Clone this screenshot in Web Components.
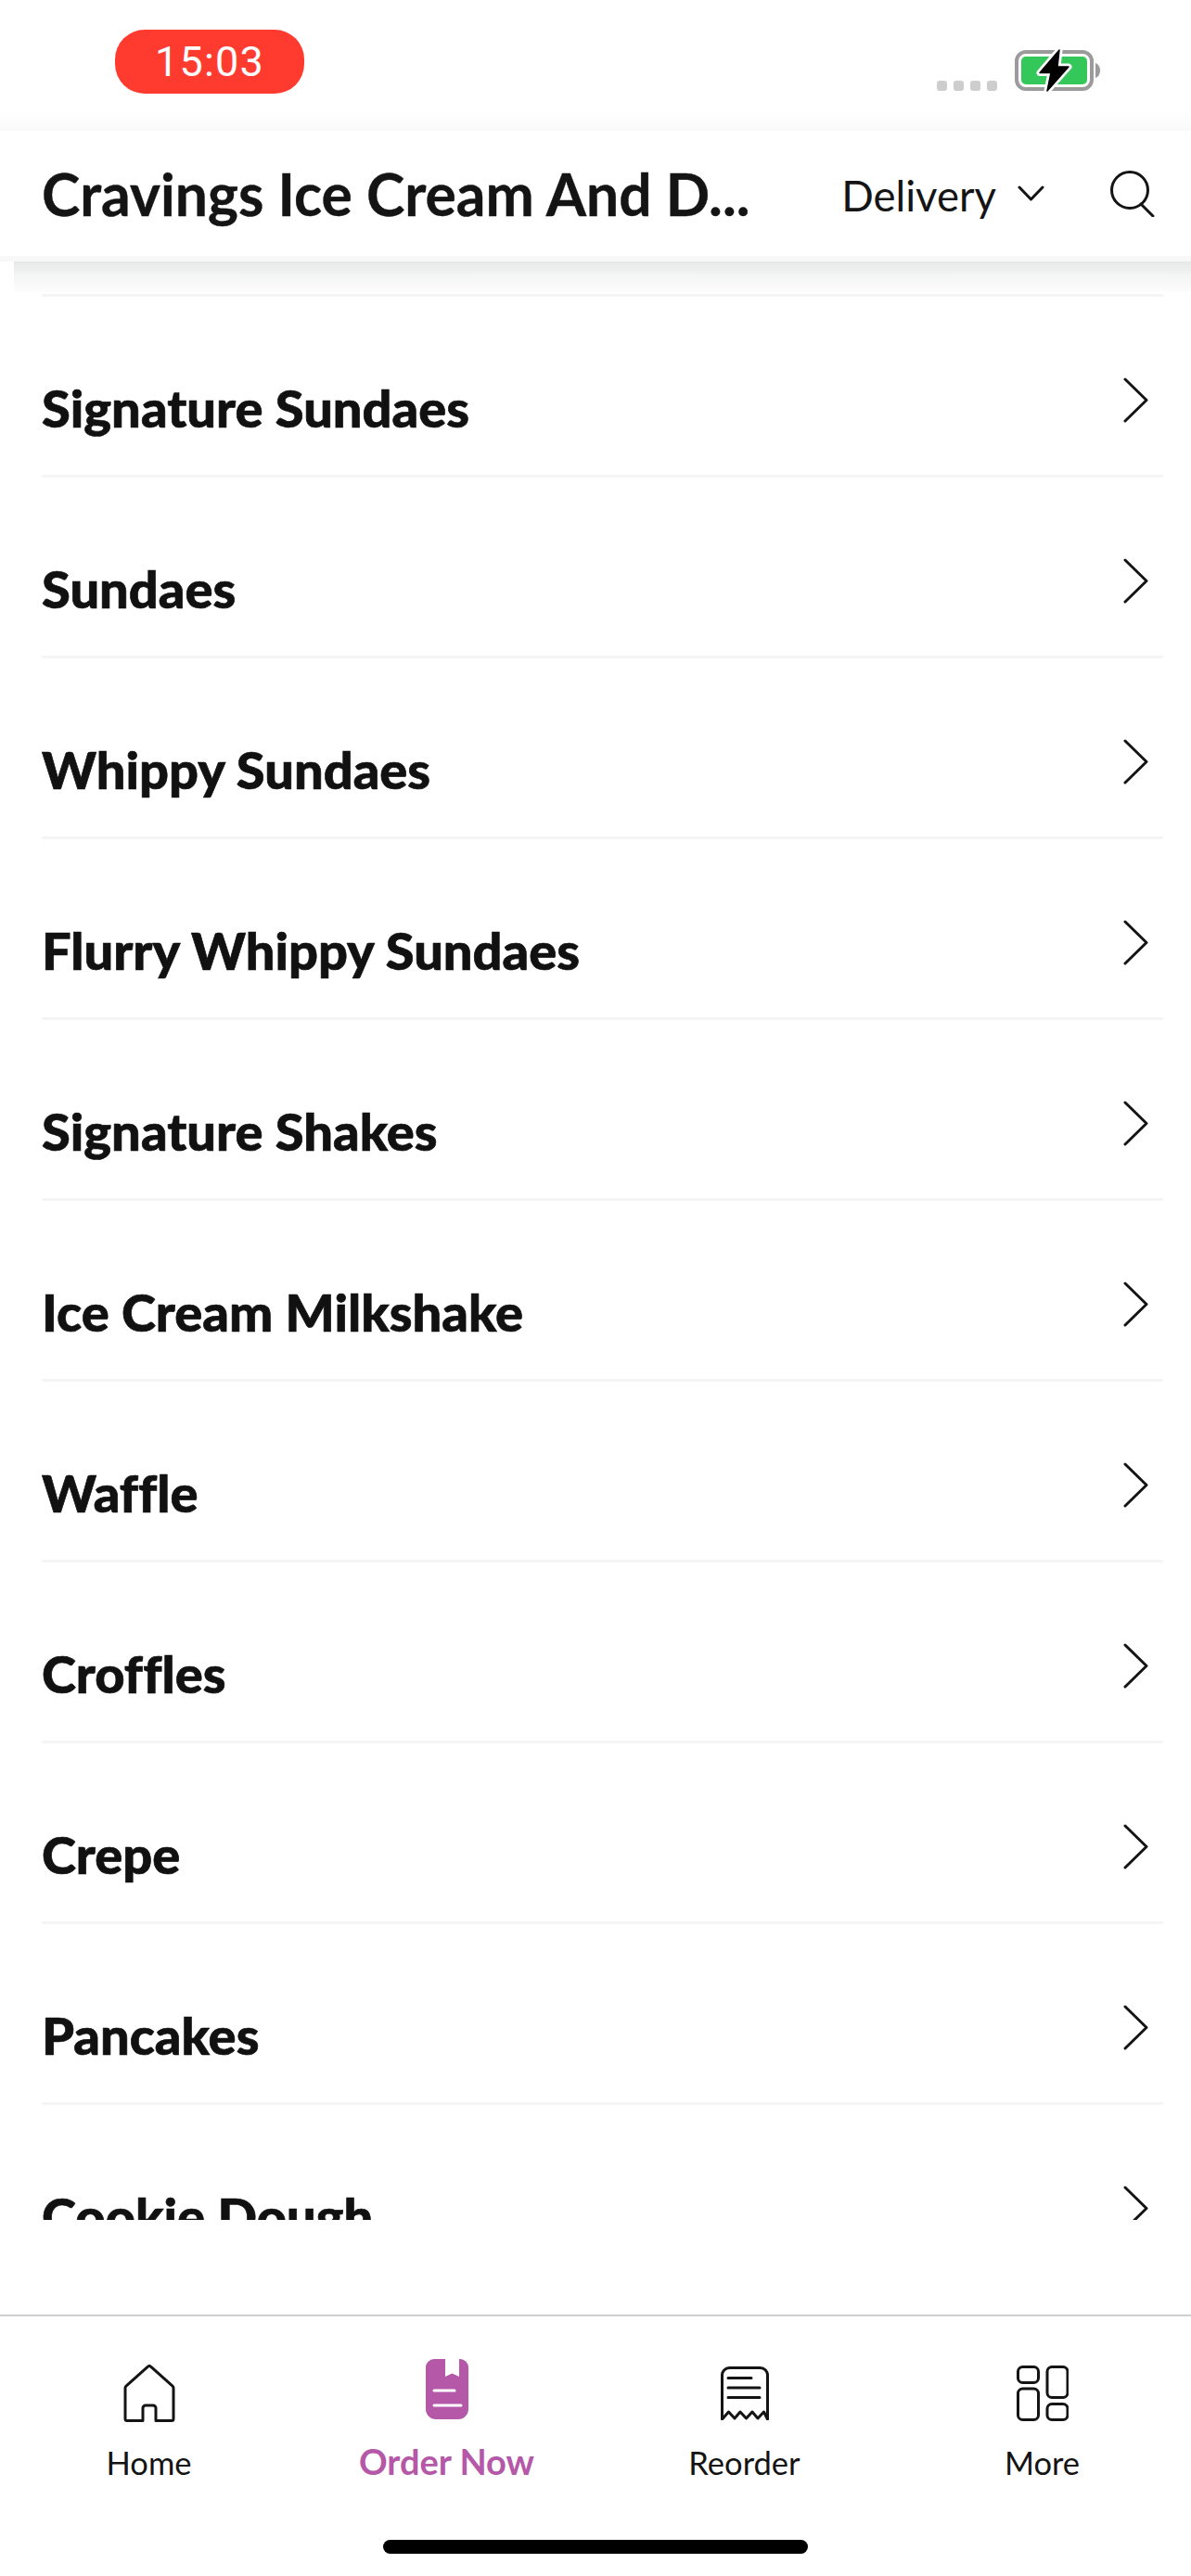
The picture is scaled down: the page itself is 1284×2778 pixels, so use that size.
<!DOCTYPE html>
<html lang="en">
<head>
<meta charset="utf-8">
<title>Cravings Ice Cream And Desserts</title>
<style>
  html, body { margin: 0; background: #fff; }
  body { font-family: Lato, "Liberation Sans", sans-serif; color: #141414; }
</style>
</head>
<body>
<app-shell>
  <status-bar slot="top" time="15:03"></status-bar>
  <app-header slot="top" title-text="Cravings Ice Cream And D..." mode="Delivery"></app-header>
  <menu-list>
    <menu-row>Signature Sundaes</menu-row>
    <menu-row>Sundaes</menu-row>
    <menu-row>Whippy Sundaes</menu-row>
    <menu-row>Flurry Whippy Sundaes</menu-row>
    <menu-row>Signature Shakes</menu-row>
    <menu-row>Ice Cream Milkshake</menu-row>
    <menu-row>Waffle</menu-row>
    <menu-row>Croffles</menu-row>
    <menu-row>Crepe</menu-row>
    <menu-row>Pancakes</menu-row>
    <menu-row>Cookie Dough</menu-row>
  </menu-list>
  <tab-bar slot="bottom">
    <tab-item label="Home">
      <svg width="56" height="62" viewBox="0 0 56 62" fill="none" stroke="#141414" stroke-width="3" stroke-linejoin="round">
        <path d="M21 60.5V47a3 3 0 0 1 3-3h8a3 3 0 0 1 3 3v13.5h17a2 2 0 0 0 2-2V25.5a3 3 0 0 0-1-2.4L29.5 2.2a2.2 2.2 0 0 0-3 0L3 23.1a3 3 0 0 0-1 2.4v33a2 2 0 0 0 2 2z"/>
      </svg>
    </tab-item>
    <tab-item label="Order Now" active>
      <svg width="46" height="66" viewBox="0 0 46 66">
        <path fill="#b558a8" d="M9 0H21V19L28.5 15.5L36 19V0H37A9 9 0 0 1 46 9V54A11 11 0 0 1 35 65H11A11 11 0 0 1 0 54V9A9 9 0 0 1 9 0Z"/>
        <path stroke="#fff" stroke-width="3" stroke-linecap="round" d="M9 34H31M9 50H38"/>
      </svg>
    </tab-item>
    <tab-item label="Reorder">
      <svg width="52" height="58" viewBox="0 0 52 58" fill="none" stroke="#141414" stroke-width="3" stroke-linejoin="round" stroke-linecap="round">
        <path d="M1.5 57V10a8 8 0 0 1 8-8.500h33a8 8 0 0 1 8 8.500V57l-4-8-6.500 7-6-7-6.500 7-6.500-7-6 7-6.500-7z"/>
        <path d="M8 12.500H33M8 23H42M8 33.500H42"/>
      </svg>
    </tab-item>
    <tab-item label="More">
      <svg width="56" height="60" viewBox="0 0 56 60" fill="none" stroke="#141414" stroke-width="3">
        <rect x="1.500" y="1.500" width="22" height="17" rx="5"/>
        <rect x="1.500" y="25" width="22" height="33.500" rx="5"/>
        <rect x="33" y="1.500" width="22" height="33" rx="5"/>
        <rect x="33" y="41.500" width="22" height="17" rx="5"/>
      </svg>
    </tab-item>
  </tab-bar>
</app-shell>

<script>
class AppShell extends HTMLElement {
    constructor() {
        super();
        this.attachShadow({ mode: 'open' });
        this.shadowRoot.innerHTML = `
            <style>
                :host { display: flex; flex-direction: column; height: 2778px; background: #fff; overflow: hidden; }
                .body { flex: 1; min-height: 0; }
            </style>
            <slot name="top"></slot>
            <div class="body"><slot></slot></div>
            <slot name="bottom"></slot>
        `;
    }
}

class StatusBar extends HTMLElement {
    constructor() {
        super();
        this.attachShadow({ mode: 'open' });
    }

    connectedCallback() {
        this.shadowRoot.innerHTML = `
            <style>
                :host {
                    display: flex;
                    align-items: flex-start;
                    justify-content: space-between;
                    height: 141px;
                    padding: 32px 97px 0 124px;
                    box-sizing: border-box;
                    background: linear-gradient(#fff 120px, #f9f9f9 141px);
                }
                #pill {
                    width: 204px;
                    height: 69px;
                    border-radius: 32px;
                    background: #ff3b30;
                    color: #fff;
                    font: 400 45px/69px Roboto, "Liberation Sans", sans-serif;
                    letter-spacing: 1.2px;
                    text-align: center;
                }
                #right { display: flex; align-items: flex-end; gap: 19px; padding-top: 21px; }
                #dots { display: flex; gap: 7px; padding-bottom: 1px; }
                #dots i { width: 11px; height: 11px; border-radius: 3px; background: #cdcdcd; }
            </style>
            <div id="pill">${this.getAttribute('time')}</div>
            <div id="right">
                <div id="dots"><i></i><i></i><i></i><i></i></div>
                <svg width="93" height="46" viewBox="0 0 93 46">
                    <rect x="2" y="3" width="81" height="40" rx="10" fill="none" stroke="#9b9b9b" stroke-width="4"/>
                    <rect x="7" y="8" width="71" height="30" rx="5" fill="#34c759"/>
                    <path d="M87 15c3 1 5 4 5 8s-2 7-5 8z" fill="#9b9b9b"/>
                    <path d="M48 1L27 25.500H39L35 45L58 19H46Z" fill="#000" stroke="#fff" stroke-width="7" stroke-linejoin="round" paint-order="stroke"/>
                    <path d="M48 1L27 25.500H39L35 45L58 19H46Z" fill="#000" stroke="#000" stroke-width="1.500" stroke-linejoin="round"/>
                </svg>
            </div>
        `;
    }
}

class AppHeader extends HTMLElement {
    constructor() {
        super();
        this.attachShadow({ mode: 'open' });
    }

    connectedCallback() {
        this.shadowRoot.innerHTML = `
            <style>
                :host {
                    display: flex;
                    align-items: center;
                    height: 135px;
                    margin-bottom: 6px;
                    padding: 0 39px 0 45px;
                    background: #fff;
                    box-shadow: 0 6px 0 #f8f8f8;
                }
                #title { flex: 1; font-size: 62.4px; font-weight: 700; white-space: nowrap; -webkit-text-stroke: 0.4px #141414; }
                #mode { font-size: 45.500px; font-weight: 400; margin: 3px 23px 0 0; }
                #chev { margin-right: 71px; }
            </style>
            <div id="title">${this.getAttribute('title-text')}</div>
            <div id="mode">${this.getAttribute('mode')}</div>
            <svg id="chev" width="29" height="17" viewBox="0 0 29 17" fill="none" stroke="#141414" stroke-width="3" stroke-linecap="round" stroke-linejoin="round">
                <path d="M2 2L14.500 15L27 2"/>
            </svg>
            <svg width="48" height="50" viewBox="0 0 48 50" fill="none" stroke="#141414" stroke-width="3" stroke-linecap="round">
                <ellipse cx="21" cy="21" rx="19.500" ry="19.500"/>
                <path d="M33 36L46 49"/>
            </svg>
        `;
    }
}

class MenuList extends HTMLElement {
    constructor() {
        super();
        this.attachShadow({ mode: 'open' });
        this.shadowRoot.innerHTML = `
            <style>
                :host { display: block; height: 2112px; overflow: hidden; }
                #shade {
                    height: 35px;
                    margin-left: 15px;
                    background: linear-gradient(#e6e7e7, #f4f5f5 45%, #fafafa 80%, #fff);
                }
                #first { height: 3px; margin: 0 30px 0 45px; background: #f5f5f5; }
            </style>
            <div id="shade"></div>
            <div id="first"></div>
            <slot></slot>
        `;
    }
}

class MenuRow extends HTMLElement {
    constructor() {
        super();
        this.attachShadow({ mode: 'open' });
        this.shadowRoot.innerHTML = `
            <style>
                :host {
                    display: flex;
                    justify-content: space-between;
                    height: 192px;
                    margin: 0 30px 0 45px;
                    border-bottom: 3px solid #f5f5f5;
                    color: #111;
                    font-size: 56px;
                    font-weight: 900;
                    font-variant-ligatures: none;
                    -webkit-text-stroke: 0.7px #111;
                }
                #label { padding-top: 87px; line-height: 66px; }
                svg { margin: 87px 16px 0 0; }
            </style>
            <div id="label"><slot></slot></div>
            <svg width="27" height="49" viewBox="0 0 27 49" fill="none" stroke="#141414" stroke-width="3" stroke-linecap="round" stroke-linejoin="round">
                <path d="M2 2L25 24.500L2 47"/>
            </svg>
        `;
    }
}

class TabBar extends HTMLElement {
    constructor() {
        super();
        this.attachShadow({ mode: 'open' });
        this.shadowRoot.innerHTML = `
            <style>
                :host {
                    display: flex;
                    flex-direction: column;
                    height: 282px;
                    box-sizing: border-box;
                    border-top: 2px solid #cfcfcf;
                    background: #fff;
                }
                #tabs { display: grid; grid-template-columns: repeat(4, 1fr); height: 241px; }
                #home { width: 458px; height: 15px; margin: 0 auto; border-radius: 8px; background: #000; }
            </style>
            <div id="tabs"><slot></slot></div>
            <div id="home"></div>
        `;
    }
}

class TabItem extends HTMLElement {
    constructor() {
        super();
        this.attachShadow({ mode: 'open' });
    }

    connectedCallback() {
        this.shadowRoot.innerHTML = `
            <style>
                :host {
                    display: flex;
                    flex-direction: column;
                    align-items: center;
                    font-size: 34.5px;
                    font-weight: 400;
                }
                :host([active]) { color: #b558a8; font-size: 38px; font-weight: 700; }
                #icon { height: 66px; margin-top: 50px; display: flex; align-items: center; }
                :host([active]) #icon { margin-top: 46px; }
                #label { line-height: 42px; margin-top: 21px; }
                :host([active]) #label { margin-top: 23px; }
            </style>
            <div id="icon"><slot></slot></div>
            <div id="label">${this.getAttribute('label')}</div>
        `;
    }
}

customElements.define('app-shell', AppShell);
customElements.define('status-bar', StatusBar);
customElements.define('app-header', AppHeader);
customElements.define('menu-list', MenuList);
customElements.define('menu-row', MenuRow);
customElements.define('tab-bar', TabBar);
customElements.define('tab-item', TabItem);
</script>
</body>
</html>
